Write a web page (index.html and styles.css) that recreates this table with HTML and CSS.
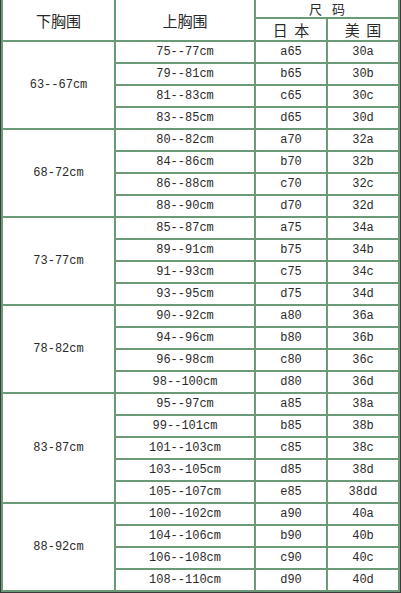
FILE: index.html
```html
<!DOCTYPE html>
<html lang="zh-CN">
<head>
<meta charset="utf-8">
<title>尺码对照表</title>
<link rel="stylesheet" href="styles.css">
</head>
<body>
<div class="frame">
<table class="size-table">
  <colgroup>
    <col class="c1"><col class="c2"><col class="c3"><col class="c4">
  </colgroup>
  <thead>
    <tr class="h1">
      <th rowspan="2" class="zh">下胸围</th>
      <th rowspan="2" class="zh">上胸围</th>
      <th colspan="2" class="zh sz">尺 码</th>
    </tr>
    <tr class="h2">
      <th class="zh sp">日 本</th>
      <th class="zh sp">美 国</th>
    </tr>
  </thead>
  <tbody>
    <tr><td rowspan="4">63--67cm</td><td>75--77cm</td><td>a65</td><td>30a</td></tr>
    <tr><td>79--81cm</td><td>b65</td><td>30b</td></tr>
    <tr><td>81--83cm</td><td>c65</td><td>30c</td></tr>
    <tr><td>83--85cm</td><td>d65</td><td>30d</td></tr>

    <tr><td rowspan="4">68-72cm</td><td>80--82cm</td><td>a70</td><td>32a</td></tr>
    <tr><td>84--86cm</td><td>b70</td><td>32b</td></tr>
    <tr><td>86--88cm</td><td>c70</td><td>32c</td></tr>
    <tr><td>88--90cm</td><td>d70</td><td>32d</td></tr>

    <tr><td rowspan="4">73-77cm</td><td>85--87cm</td><td>a75</td><td>34a</td></tr>
    <tr><td>89--91cm</td><td>b75</td><td>34b</td></tr>
    <tr><td>91--93cm</td><td>c75</td><td>34c</td></tr>
    <tr><td>93--95cm</td><td>d75</td><td>34d</td></tr>

    <tr><td rowspan="4">78-82cm</td><td>90--92cm</td><td>a80</td><td>36a</td></tr>
    <tr><td>94--96cm</td><td>b80</td><td>36b</td></tr>
    <tr><td>96--98cm</td><td>c80</td><td>36c</td></tr>
    <tr><td>98--100cm</td><td>d80</td><td>36d</td></tr>

    <tr><td rowspan="5">83-87cm</td><td>95--97cm</td><td>a85</td><td>38a</td></tr>
    <tr><td>99--101cm</td><td>b85</td><td>38b</td></tr>
    <tr><td>101--103cm</td><td>c85</td><td>38c</td></tr>
    <tr><td>103--105cm</td><td>d85</td><td>38d</td></tr>
    <tr><td>105--107cm</td><td>e85</td><td>38dd</td></tr>

    <tr><td rowspan="4">88-92cm</td><td>100--102cm</td><td>a90</td><td>40a</td></tr>
    <tr><td>104--106cm</td><td>b90</td><td>40b</td></tr>
    <tr><td>106--108cm</td><td>c90</td><td>40c</td></tr>
    <tr><td>108--110cm</td><td>d90</td><td>40d</td></tr>
  </tbody>
</table>
</div>
</body>
</html>
```

FILE: styles.css
```css
html, body {
  margin: 0;
  padding: 0;
  background: #ffffff;
}

.frame {
  width: 401px;
  height: 593px;
  box-sizing: border-box;
  border-left: 1px solid #3a3a3a;
  border-right: 1px solid #3a3a3a;
  border-bottom: 1px solid #3a3a3a;
  overflow: hidden;
  background: #ffffff;
}

.size-table {
  width: 399px;
  margin-top: -2px;
  border-collapse: separate;
  border-spacing: 2px;
  background: #6a9a76;
  table-layout: fixed;
  font-family: "Liberation Mono", "Noto Sans CJK SC", monospace;
  font-size: 12px;
  color: #2a2a2a;
}

.c1 { width: 111px; }
.c2 { width: 138px; }
.c3 { width: 70px; }
.c4 { width: 70px; }

.size-table th,
.size-table td {
  background: #ffffff;
  padding: 0;
  text-align: center;
  vertical-align: middle;
  font-weight: normal;
  white-space: nowrap;
}

.size-table td {
  height: 20px;
  line-height: 20px;
}

.size-table .zh {
  font-family: "Noto Sans CJK SC", sans-serif;
  font-size: 15px;
  color: #2a2a2a;
}

.size-table .sp {
  word-spacing: 3px;
}

.size-table .sz {
  font-size: 13px;
  word-spacing: 7px;
}

.h1 th {
  height: 17px;
  line-height: 17px;
}

.h2 th {
  height: 21px;
  line-height: 21px;
}
```
